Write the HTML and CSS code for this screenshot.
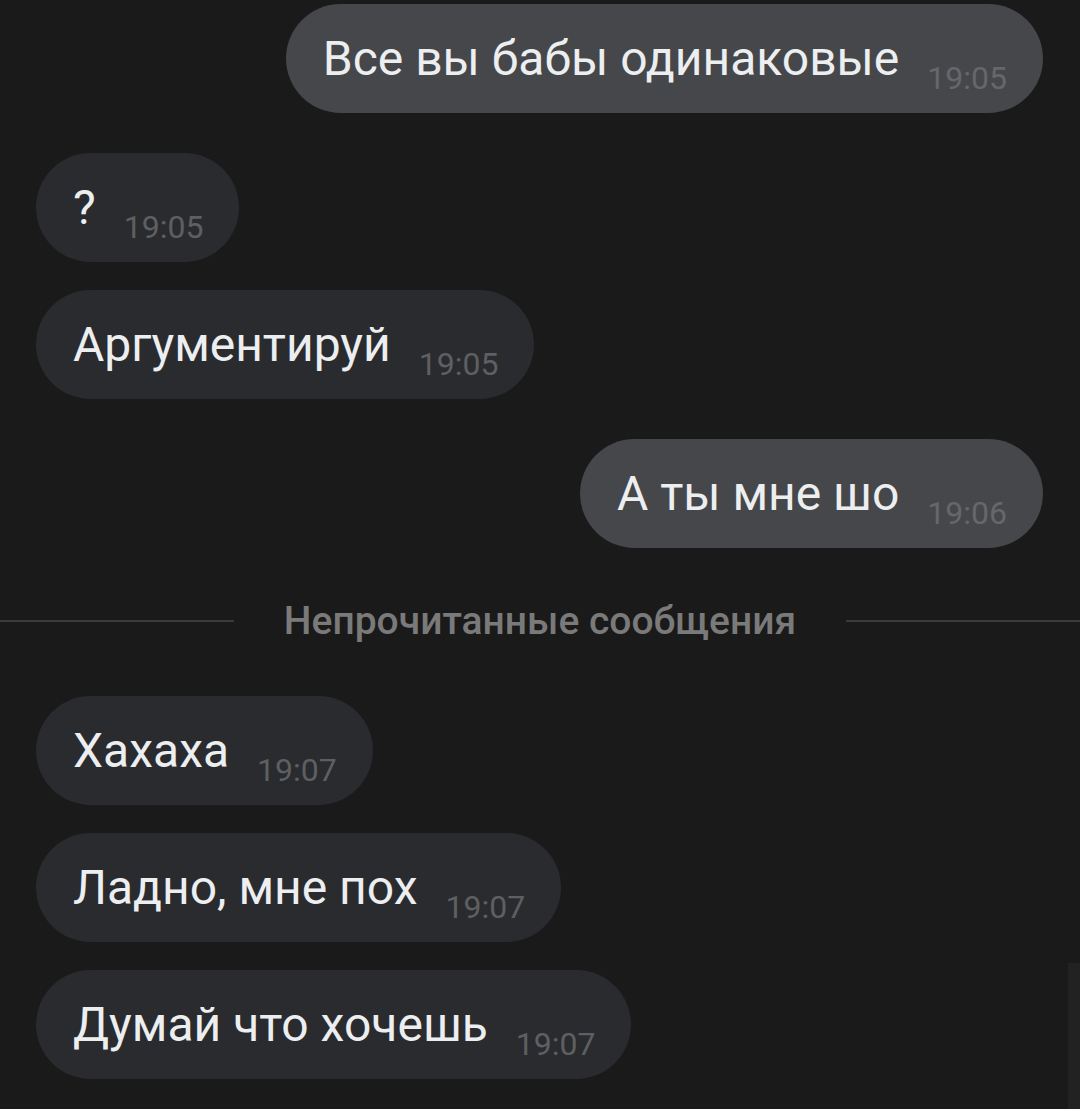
FILE: index.html
```html
<!DOCTYPE html>
<html lang="ru">
<head>
    <meta charset="UTF-8">
    <meta name="viewport" content="width=device-width, initial-scale=1.0">
    <title>Чат</title>
    <link rel="stylesheet" href="styles.css">
</head>
<body>
    <div class="chat">
        <div class="row out">
            <div class="bubble"><span class="text">Все вы бабы одинаковые</span><span class="time">19:05</span></div>
        </div>
        <div class="row in side-change">
            <div class="bubble"><span class="text">?</span><span class="time">19:05</span></div>
        </div>
        <div class="row in">
            <div class="bubble"><span class="text">Аргументируй</span><span class="time">19:05</span></div>
        </div>
        <div class="row out side-change">
            <div class="bubble"><span class="text">А ты мне шо</span><span class="time">19:06</span></div>
        </div>

        <div class="divider">
            <div class="line"></div>
            <span class="divider-text">Непрочитанные сообщения</span>
            <div class="line"></div>
        </div>

        <div class="row in first">
            <div class="bubble"><span class="text">Хахаха</span><span class="time">19:07</span></div>
        </div>
        <div class="row in">
            <div class="bubble"><span class="text">Ладно, мне пох</span><span class="time">19:07</span></div>
        </div>
        <div class="row in">
            <div class="bubble"><span class="text">Думай что хочешь</span><span class="time">19:07</span></div>
        </div>
    </div>
    <div class="scroll-track"></div>
</body>
</html>
```

FILE: styles.css
```css
body {
    margin: 0;
    background-color: #1a1a1a;
    font-family: Roboto, "Noto Sans", sans-serif;
    height: 1109px;
    overflow: hidden;
}

.chat {
    display: flex;
    flex-direction: column;
    padding: 4px 37px 0 36px;
}

.row {
    display: flex;
    margin-top: 28px;
}

.row:first-child {
    margin-top: 0;
}

.row.side-change {
    margin-top: 40px;
}

.row.first {
    margin-top: 0;
}

.row.out {
    justify-content: flex-end;
}

.row.in {
    justify-content: flex-start;
}

.bubble {
    display: flex;
    align-items: center;
    height: 109px;
    box-sizing: border-box;
    padding: 0 36px 0 37px;
    border-radius: 55px;
    background-color: #2a2b2e;
}

.out .bubble {
    background-color: #45474a;
}

.text {
    color: #eceef0;
    font-size: 48px;
    line-height: 1;
}

.time {
    color: #5e5f62;
    font-size: 32px;
    line-height: 1;
    margin-left: 28px;
    margin-top: 38px;
}

.out .time {
    color: #65676a;
}

.divider {
    display: flex;
    align-items: center;
    height: 40px;
    margin: 53px -37px 55px -36px;
}

.divider .line {
    flex: 1;
    height: 2px;
    background-color: #3a3a3a;
}

.divider-text {
    margin: 0 50px;
    color: #7a7a7a;
    font-size: 39px;
    font-weight: 500;
}

.scroll-track {
    position: absolute;
    right: 0;
    top: 963px;
    width: 12px;
    height: 146px;
    background-color: #222222;
}
```
